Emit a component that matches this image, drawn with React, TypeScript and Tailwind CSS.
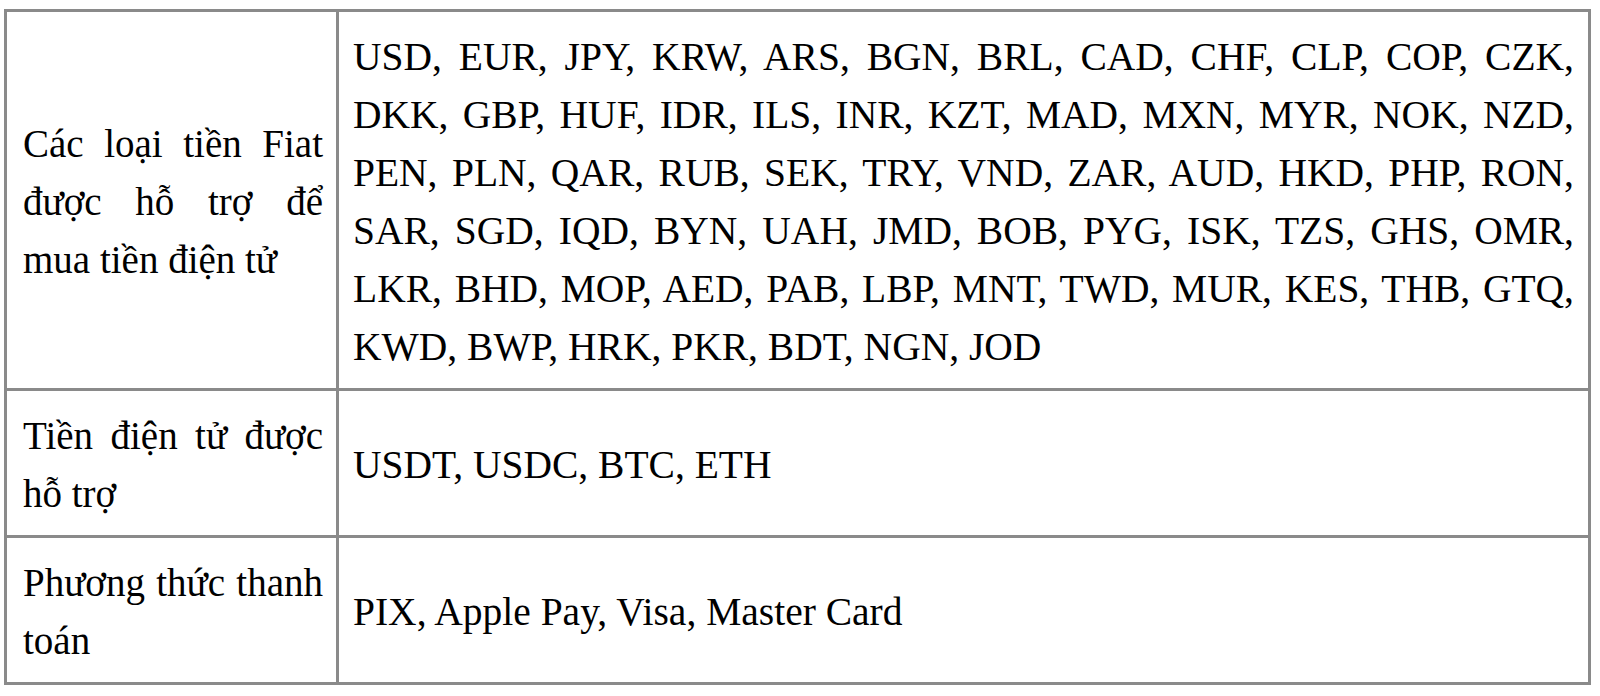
const rows = [
  {
    label: 'Các loại tiền Fiat được hỗ trợ để mua tiền điện tử',
    value:
      'USD, EUR, JPY, KRW, ARS, BGN, BRL, CAD, CHF, CLP, COP, CZK, DKK, GBP, HUF, IDR, ILS, INR, KZT, MAD, MXN, MYR, NOK, NZD, PEN, PLN, QAR, RUB, SEK, TRY, VND, ZAR, AUD, HKD, PHP, RON, SAR, SGD, IQD, BYN, UAH, JMD, BOB, PYG, ISK, TZS, GHS, OMR, LKR, BHD, MOP, AED, PAB, LBP, MNT, TWD, MUR, KES, THB, GTQ, KWD, BWP, HRK, PKR, BDT, NGN, JOD',
  },
  { label: 'Tiền điện tử được hỗ trợ', value: 'USDT, USDC, BTC, ETH' },
  { label: 'Phương thức thanh toán', value: 'PIX, Apple Pay, Visa, Master Card' },
];

const App = () => {
  return (
    <div className="min-h-screen bg-white pl-[4px] pt-[9px]" style={{ fontFamily: '"Liberation Serif", "Times New Roman", serif' }}>
      <div className="w-[1587px] border-[3px] border-[#8a8a8a] leading-[58px] text-black">
        {rows.map((row, idx) => (
          <div key={idx} className={`flex ${idx > 0 ? 'border-t-[3px] border-[#8a8a8a]' : ''}`}>
            <div className="w-[332px] shrink-0 border-r-[3px] border-[#8a8a8a] pl-[16px] pr-[13px] pt-[16px] pb-[12px] flex items-center text-[39px]">
              <p className="text-justify w-full">{row.label}</p>
            </div>
            <div className="flex-1 px-[14px] pt-[16px] pb-[12px] flex items-center text-[39.5px]">
              <p className="text-justify w-full">{row.value}</p>
            </div>
          </div>
        ))}
      </div>
    </div>
  );
};

export default App;
